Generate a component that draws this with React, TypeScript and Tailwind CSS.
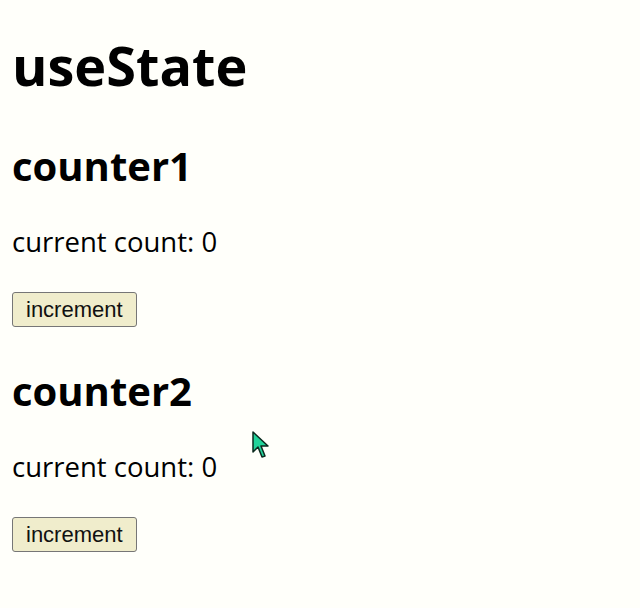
import { useState } from 'react';

function Counter({ title }: { title: string }) {
  const [count, setCount] = useState(0);
  return (
    <section className="flex flex-col items-start">
      <h2 className="mt-[38px] text-[40px] leading-[52px] font-bold">{title}</h2>
      <p className="mt-[32px] text-[27.5px] leading-[36px]">current count: {count}</p>
      <button
        onClick={() => setCount((c) => c + 1)}
        className="mt-[32px] h-[35px] px-[13px] rounded-[3px] border border-[#767676] bg-[#f0edcc] text-[22px] leading-none text-[#111] font-['Liberation_Sans',Arial,sans-serif]"
      >
        increment
      </button>
    </section>
  );
}

export default function App() {
  return (
    <div className="relative min-h-[608px] bg-[#fffffa] px-3 pt-[28px] text-black font-['Open_Sans','Noto_Sans',sans-serif]">
      <h1 className="text-[54px] leading-[74px] font-bold">useState</h1>
      <Counter title="counter1" />
      <Counter title="counter2" />

      {/* mouse pointer captured in the screenshot */}
      <svg className="absolute left-[252px] top-[431px]" width="18" height="28" viewBox="0 0 18 28">
        <path d="M1 1 L1 21 L6 16 L10 26 L13 25 L9 15 L16 15 Z" fill="#22d39a" stroke="#0b2a1e" strokeWidth="1.5" strokeLinejoin="round" />
      </svg>
    </div>
  );
}
